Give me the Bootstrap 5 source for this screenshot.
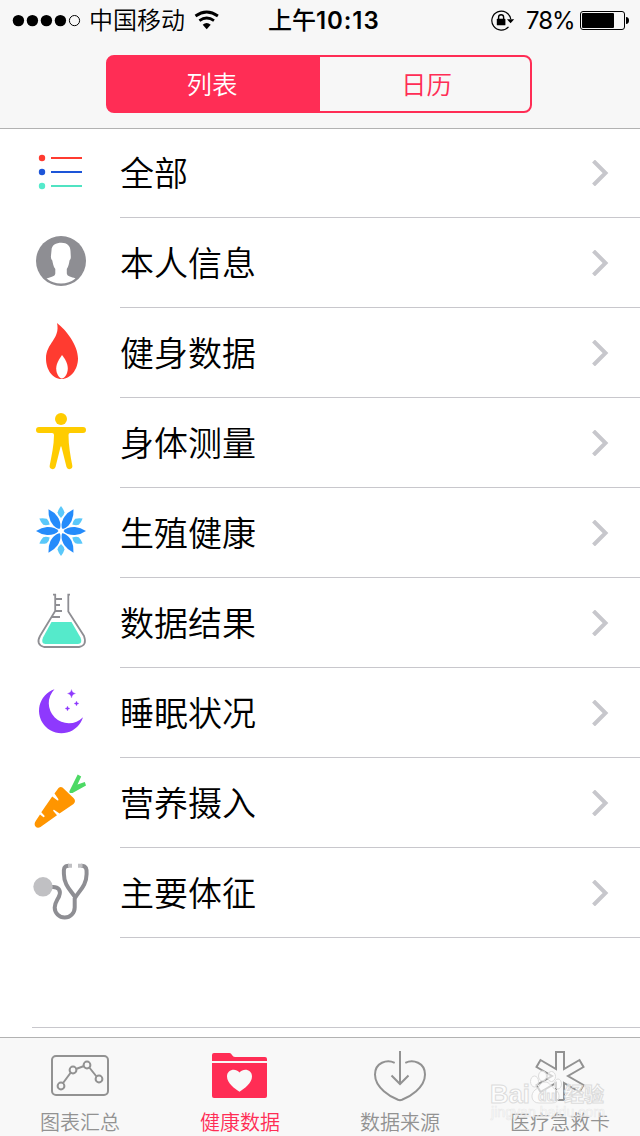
<!DOCTYPE html>
<html lang="zh-CN">
<head>
<meta charset="utf-8">
<meta name="viewport" content="width=device-width, initial-scale=1">
<title>健康数据</title>
<link href="https://cdn.jsdelivr.net/npm/bootstrap@5.3.0/dist/css/bootstrap.min.css" rel="stylesheet">
<style>
  body { font-family: Inter, "Noto Sans CJK SC", sans-serif; color: #000; background: #fff; font-weight: 350; overflow: hidden; }
  .app { width: 640px; height: 1136px; }
  .top-bar { height: 129px; background: #f7f7f7; border-bottom: 1px solid #b2b2b2; }
  .status { height: 40px; padding-left: 12px; font-size: 24px; line-height: 42px; }
  .status svg { display: block; flex: none; }
  .carrier { margin-left: 8px; width: 105px; padding-top: 2px; font-weight: 350; }
  .clock { left: 268px; top: 0; font-weight: 600; letter-spacing: .9px; white-space: nowrap; }
  .clock-cn { font-weight: 500; letter-spacing: 0; }
  .percent { font-weight: 400; width: 54px; padding-top: 2px; letter-spacing: -1.1px; }
  .segments { width: 426px; height: 58px; margin: 15px 0 0 106px; border: 2px solid #ff2d55; border-radius: 8px; overflow: hidden; background: linear-gradient(90deg, #ff2d55 50%, transparent 50%); }
  .segments .btn { flex: none; font-size: 25.5px; font-weight: 350; line-height: 1; border: 0; border-radius: 0; color: #ff2d55; padding: 1px 0 0; }
  .segments .btn:first-child { width: 212px; padding-right: 4px; }
  .segments .btn:last-child { width: 210px; padding-left: 3px; }
  .segments .btn.active { background: #ff2d55; color: #fff; }
  .category-list { margin-top: -1px; border-radius: 0; }
  .category-list .list-group-item { height: 90px; background: transparent; color: #000; }
  .category-icon { width: 120px; height: 90px; flex: none; }
  .label-cell { border-bottom: 1px solid #c8c7cc; font-size: 34px; line-height: 1; padding-right: 31px; }
  .label-cell span { padding-top: 2px; }
  .chevron { width: 17px; height: 26px; fill: none; stroke: #c7c7cc; stroke-width: 4; }
  .empty-row { height: 90px; margin-left: 32px; border-bottom: 1px solid #c8c7cc; }
  .tab-bar { height: 99px; margin-top: 9px; background: #f8f8f8; border-top: 1px solid #b2b2b2; color: #929292; font-size: 20px; }
  .tab-bar .nav-link { padding: 0; color: #929292; line-height: 26px; font-weight: 350; height: 98px; }
  .tab-bar .nav-link.active { color: #ff2d55; }
  .tab-bar svg { display: block; height: 72px; width: 160px; }
  .watermark { right: 0; bottom: 0; pointer-events: none; }
</style>
<script src="https://cdn.jsdelivr.net/npm/bootstrap@5.3.0/dist/js/bootstrap.bundle.min.js"></script>
</head>
<body>
<svg class="position-absolute" width="0" height="0"><defs><path id="chevron" d="M1.500 1L13.500 13L1.500 25"/></defs></svg>
<div class="app d-flex flex-column position-relative">
  <header class="top-bar flex-shrink-0">
    <div class="status d-flex align-items-center position-relative">
      <svg width="69" height="40" viewBox="12 0 69 40"><circle cx="18.4" cy="20.6" r="5.7"/><circle cx="32.4" cy="20.6" r="5.7"/><circle cx="46.4" cy="20.6" r="5.7"/><circle cx="60.4" cy="20.6" r="5.7"/><circle cx="74.5" cy="20.6" r="5.1" fill="none" stroke="#000"/></svg>
      <span class="carrier">中国移动</span>
      <svg width="26" height="40" viewBox="194 0 26 40" fill="none" stroke="#000" stroke-width="2.800"><path d="M195.500 16Q206.700 8 217.900 16"/><path d="M199.400 20.600Q206.700 15.400 214 20.600"/><path d="M202.700 24.700Q206.700 21.500 210.700 24.700L206.700 29.200Z" fill="#000" stroke="none"/></svg>
      <div class="clock position-absolute"><span class="clock-cn">上午</span>10:13</div>
      <div class="ms-auto d-flex align-items-center">
        <svg width="36" height="40" viewBox="490 0 36 40"><path d="M508.500 26.900A9.500 9.500 0 1 1 510.700 19" fill="none" stroke="#000" stroke-width="1.200"/><path d="M507 19.300H514.200L510.600 23.300Z"/><rect x="496.800" y="18.800" width="8.600" height="6.500" rx=".6"/><path d="M498.600 19V17Q498.600 14.700 501.100 14.700T503.600 17V19" fill="none" stroke="#000" stroke-width="1.400"/></svg>
        <span class="percent">78%</span>
        <svg width="60" height="40" viewBox="580 0 60 40"><rect x="580.500" y="11.500" width="44" height="18" rx="2.500" fill="none" stroke="#000"/><rect x="582" y="13" width="32" height="15" rx="1"/><path d="M626 17Q629 17.300 629 20.500T626 24Z"/></svg>
      </div>
    </div>
    <div class="segments d-flex"><button class="btn active">列表</button><button class="btn">日历</button></div>
  </header>

  <main class="list-group list-group-flush category-list flex-shrink-0">
    <div class="list-group-item d-flex border-0 p-0">
      <svg class="category-icon" viewBox="0 128 120 90"><g stroke-width="2"><path d="M51 158h31" stroke="#ff3b30"/><path d="M51 172h31" stroke="#1d55d8"/><path d="M51 186h31" stroke="#50e3c2"/></g><circle cx="42" cy="158" r="3.200" fill="#ff3b30"/><circle cx="42" cy="172" r="3.200" fill="#1d55d8"/><circle cx="42" cy="186" r="3.200" fill="#55eacb"/></svg>
      <div class="label-cell d-flex flex-grow-1 align-items-center justify-content-between"><span>全部</span><svg class="chevron"><use href="#chevron"/></svg></div>
    </div>
    <div class="list-group-item d-flex border-0 p-0">
      <svg class="category-icon" viewBox="0 218 120 90"><circle cx="61" cy="261" r="25" fill="#8e8e93"/><path d="M46.500 278.500C51 276.800 55 276.800 55.300 273.500V269C53.300 266.500 52.700 262.500 52.300 260.500Q50.800 259.500 50.900 256.500L51.500 250.500C51.500 245 56 242.800 61.500 242.800S70.500 246 70.500 251L70.800 256.500Q71 259.500 69.500 260.500C69.200 263 68.500 266.500 66.800 269V273.500C67.300 276.800 71.500 276.600 75.500 278.500A23.200 23.200 0 0 1 46.500 278.500Z" fill="#fff"/></svg>
      <div class="label-cell d-flex flex-grow-1 align-items-center justify-content-between"><span>本人信息</span><svg class="chevron"><use href="#chevron"/></svg></div>
    </div>
    <div class="list-group-item d-flex border-0 p-0">
      <svg class="category-icon" viewBox="0 308 120 90"><path d="M57 323C66 330 78 345 78 358.500C78 369 71 379 61.500 379S46 369 46 358.500C46 343 60.500 339 57 323Z" fill="#ff3b30"/><path d="M62 355C59.500 358.500 56.200 363.500 56.200 368.500C56.200 373.500 59 378.200 61.700 378.500C65 378 67.800 373.500 67.800 368.500C67.800 363.500 65 358.500 62 355Z" fill="#fff"/></svg>
      <div class="label-cell d-flex flex-grow-1 align-items-center justify-content-between"><span>健身数据</span><svg class="chevron"><use href="#chevron"/></svg></div>
    </div>
    <div class="list-group-item d-flex border-0 p-0">
      <svg class="category-icon" viewBox="0 398 120 90" fill="#ffcc00"><circle cx="61" cy="419" r="6"/><path d="M39 427H83A3 3 0 0 1 83 433H70Q68.500 433 68.500 435C68.500 445 70.500 456 72.300 465.500A3 3 0 0 1 66.500 467L61.500 447Q61 445.500 60.500 447L55.500 467A3 3 0 0 1 49.700 465.500C51.500 456 54 445 54 435Q54 433 52 433H39A3 3 0 0 1 39 427Z"/></svg>
      <div class="label-cell d-flex flex-grow-1 align-items-center justify-content-between"><span>身体测量</span><svg class="chevron"><use href="#chevron"/></svg></div>
    </div>
    <div class="list-group-item d-flex border-0 p-0">
      <svg class="category-icon" viewBox="0 488 120 90"><defs><path id="petal" d="M0-2.500C-3-4.500-4.300-9-4.100-14Q-3.700-19.500 0-25Q3.700-19.500 4.100-14C4.300-9 3-4.500 0-2.500Z"/><path id="petal-tip" d="M0-25Q-2.500-22-3.500-18.500Q-3-15.500 0-13Q3-15.500 3.500-18.500Q2.500-22 0-25Z"/></defs><g transform="translate(61 531)"><g fill="#5ac8fa"><use href="#petal-tip"/><use href="#petal-tip" transform="rotate(60)"/><use href="#petal-tip" transform="rotate(120)"/><use href="#petal-tip" transform="rotate(180)"/><use href="#petal-tip" transform="rotate(240)"/><use href="#petal-tip" transform="rotate(300)"/></g><g fill="#248bfb" stroke="#fff" stroke-width="1.200" paint-order="stroke"><use href="#petal" transform="rotate(30)"/><use href="#petal" transform="rotate(90)"/><use href="#petal" transform="rotate(150)"/><use href="#petal" transform="rotate(210)"/><use href="#petal" transform="rotate(270)"/><use href="#petal" transform="rotate(330)"/></g></g></svg>
      <div class="label-cell d-flex flex-grow-1 align-items-center justify-content-between"><span>生殖健康</span><svg class="chevron"><use href="#chevron"/></svg></div>
    </div>
    <div class="list-group-item d-flex border-0 p-0">
      <svg class="category-icon" viewBox="0 578 120 90"><path d="M51.500 622H71.500L80.500 637.500Q83 643.500 78 644H45.500Q40.500 643.500 43 637.500Z" fill="#55eacb"/><path d="M53 594.700H55.200V611L40 636Q35.500 644.500 44 647H79Q87.500 645.500 84 636L68.300 611.500V594.700H70M55 599H62M55 605H60M55 611H62M52 617H60" fill="none" stroke="#8e8e93" stroke-width="1.800"/></svg>
      <div class="label-cell d-flex flex-grow-1 align-items-center justify-content-between"><span>数据结果</span><svg class="chevron"><use href="#chevron"/></svg></div>
    </div>
    <div class="list-group-item d-flex border-0 p-0">
      <svg class="category-icon" viewBox="0 668 120 90" fill="#8e39fd"><path d="M54.500 689.300A19.500 19.500 0 0 0 83 717.300A22.500 22.500 0 1 1 54.500 689.300Z"/><path d="M71.500 689.500Q72 693 75.500 693.500Q72 694 71.500 698Q71 694 67.500 693.500Q71 693 71.500 689.500ZM76.500 701Q76.700 703.200 79 703.500Q76.700 703.800 76.500 706Q76.300 703.800 74 703.500Q76.300 703.200 76.500 701ZM67.500 706Q67.700 708.200 70 708.500Q67.700 708.800 67.500 711Q67.300 708.800 65 708.500Q67.300 708.200 67.500 706Z" stroke="#8e39fd" stroke-width=".25"/></svg>
      <div class="label-cell d-flex flex-grow-1 align-items-center justify-content-between"><span>睡眠状况</span><svg class="chevron"><use href="#chevron"/></svg></div>
    </div>
    <div class="list-group-item d-flex border-0 p-0">
      <svg class="category-icon" viewBox="0 758 120 90"><path d="M54.500 793.500L58.500 788Q60.500 786.500 62.500 787.500L73.500 798Q76.500 801 73.500 804L59.500 813.500L54 809.800Q52.800 809.800 53.300 811L57 815.200L40.500 827Q37.500 828.800 35.500 826.500T36 820.500L40 814.500L43.500 817.200Q45 817.300 44.500 815.800L41.300 812.300L52.200 796.500L57.500 800.500Q59 800.500 58.300 799Z" fill="#ff9500"/><path d="M69.500 791L77.700 774.500L81.200 776.500L77.500 784.500L84.800 782L86 785.500L72.500 793Q68.500 793.500 69.500 791Z" fill="#4cd964"/></svg>
      <div class="label-cell d-flex flex-grow-1 align-items-center justify-content-between"><span>营养摄入</span><svg class="chevron"><use href="#chevron"/></svg></div>
    </div>
    <div class="list-group-item d-flex border-0 p-0">
      <svg class="category-icon" viewBox="0 848 120 90" fill="none" stroke="#8e8e93" stroke-width="4"><path d="M52 887C58.500 886.500 61.500 890.500 59 896.500C57 900.500 54.700 903 54.700 907.500A10 10 0 0 0 74.700 907.500V898M69 865.700C63.500 865.700 63.700 869 63.900 874C64 885 70.500 890 75.300 897.500C80 890 86.500 885 86.600 874C86.800 869 86.500 865.700 81 865.700"/><path d="M68 865.700H72M78 865.700H82.500" stroke="#c0c0c3"/><circle cx="43" cy="886.800" r="9.700" fill="#c0c0c3" stroke="none"/></svg>
      <div class="label-cell d-flex flex-grow-1 align-items-center justify-content-between"><span>主要体征</span><svg class="chevron"><use href="#chevron"/></svg></div>
    </div>
  </main>
  <div class="empty-row flex-shrink-0"></div>

  <nav class="tab-bar nav nav-fill flex-nowrap flex-shrink-0">
    <a class="nav-link text-center col-3">
      <svg viewBox="0 1038 160 72" fill="none" stroke="#929292" stroke-width="2"><rect x="52" y="1056" width="56" height="39" rx="4"/><path d="M62.700 1083.500L70.800 1072.500M76 1069L84 1066M89.300 1067.500L96.500 1076.500"/><circle cx="61" cy="1086" r="3.400"/><circle cx="73" cy="1070" r="3.400"/><circle cx="87" cy="1065" r="3.400"/><circle cx="99" cy="1079" r="3.400"/></svg>图表汇总</a>
    <a class="nav-link active text-center col-3">
      <svg viewBox="160 1038 160 72" fill="#ff2d55"><path d="M212 1061V1055Q212 1053 214 1053H229.500Q231 1053 232 1055T235 1057H265Q267 1057 267 1059V1061Z"/><path d="M212 1063H267V1096Q267 1098 265 1098H214Q212 1098 212 1096Z"/><path d="M239.500 1091.700C235 1089 227 1083 227 1076.500C227 1070 235 1067.500 239.500 1072.500C244 1067.500 252 1070 252 1076.500C252 1083 244 1089 239.500 1091.700Z" fill="#f8f8f8"/></svg>健康数据</a>
    <a class="nav-link text-center col-3">
      <svg viewBox="320 1038 160 72" fill="none" stroke="#929292" stroke-width="2"><path d="M394.700 1062.800C387 1059 375 1062.500 375 1074.500C375 1088 391 1097 398 1099.800Q400 1100.500 402 1099.800C409 1097 425 1088 425 1074.500C425 1062.500 413 1059 405.300 1062.800M400 1051V1083.500M391.500 1075.500L400 1084L408.500 1075.500"/></svg>数据来源</a>
    <a class="nav-link text-center col-3">
      <svg viewBox="480 1038 160 72" fill="none" stroke="#929292" stroke-width="2"><path d="M556 1052H564V1069L579.500 1060L583.500 1067L568 1076L583.500 1085L579.500 1092L564 1083V1100H556V1083L540.500 1092L536.500 1085L552 1076L536.500 1067L540.500 1060L556 1069Z"/></svg>医疗急救卡</a>
  </nav>

  <svg class="watermark position-absolute" width="160" height="66" viewBox="480 1070 160 66" fill="#fff" fill-opacity=".6" stroke="#dcdcdc" stroke-width="1">
    <text x="490" y="1103" font-family="Liberation Sans" font-size="26" font-weight="700" textLength="40" lengthAdjust="spacingAndGlyphs">Bai</text>
    <g><ellipse cx="534.500" cy="1081.500" rx="4" ry="5.500"/><ellipse cx="542.500" cy="1076" rx="4" ry="5"/><ellipse cx="551.500" cy="1076.500" rx="4" ry="5"/><ellipse cx="558" cy="1084" rx="3.500" ry="5"/><path d="M545 1082C550 1082 551 1087 556 1090C561 1094 560 1103 552 1103H539C531 1103 530 1094 535 1090C540 1087 540 1082 545 1082Z"/></g>
    <text x="538" y="1101" font-family="Liberation Sans" font-size="14" font-weight="700">du</text>
    <text x="564" y="1102" font-family="Noto Sans CJK SC" font-size="20" font-weight="700">经验</text>
    <text x="491" y="1117" font-family="Liberation Sans" font-size="14" textLength="114" lengthAdjust="spacingAndGlyphs" stroke-opacity=".6" stroke-width=".6">jingyan.baidu.com</text>
  </svg>
</div>
</body>
</html>
